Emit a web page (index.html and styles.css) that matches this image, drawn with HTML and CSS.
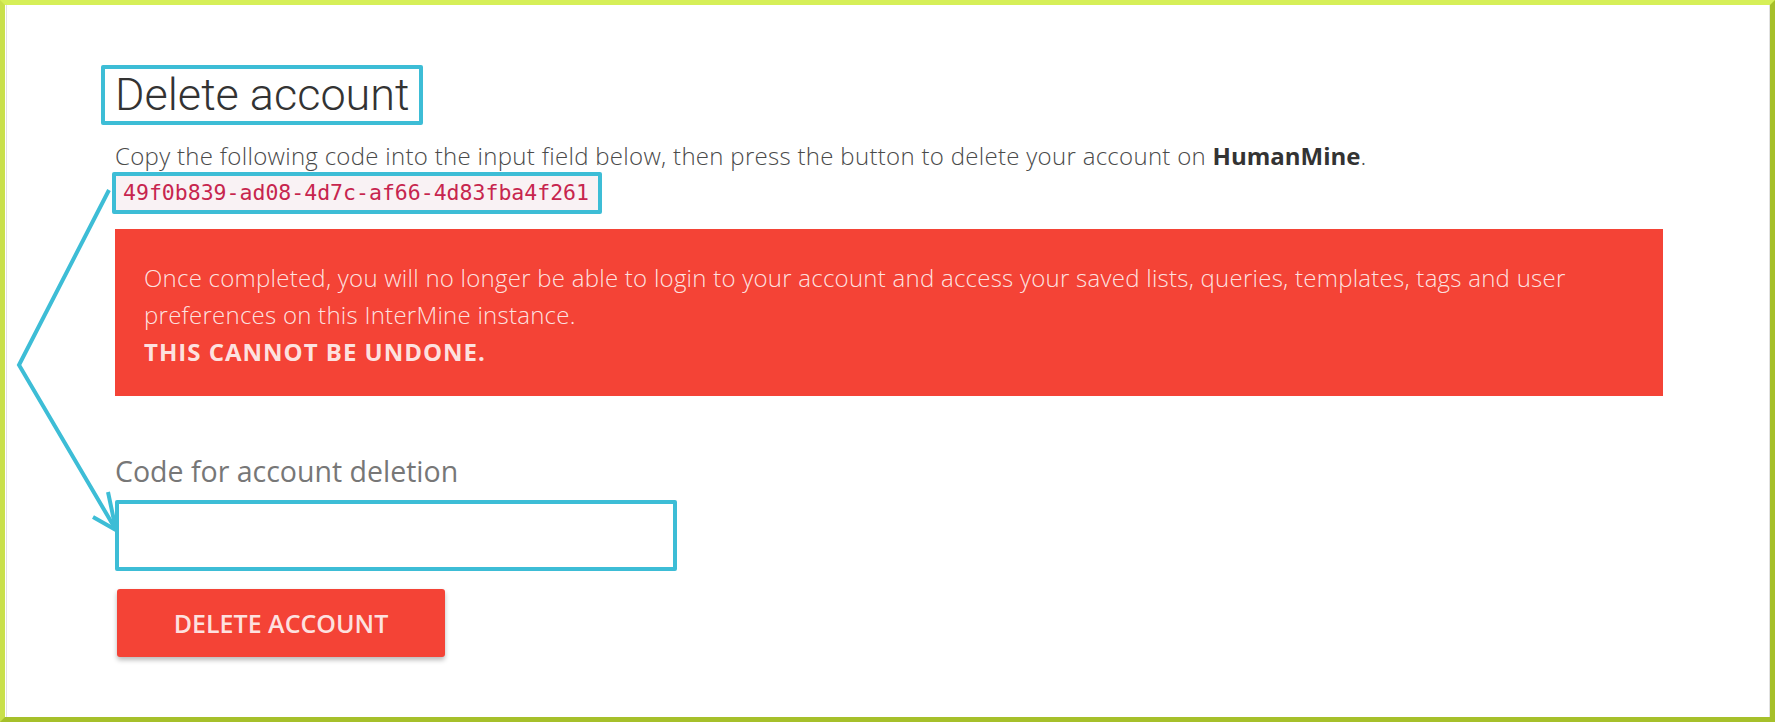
FILE: index.html
```html
<!DOCTYPE html>
<html lang="en">
<head>
<meta charset="utf-8">
<title>Delete account</title>
<link rel="stylesheet" href="styles.css">
</head>
<body>
<div class="frame">
  <div class="inner">
    <div class="content">
      <h1 class="title">Delete account</h1>
      <p class="lead">Copy the following code into the input field below, then press the button to delete your account on <strong>HumanMine</strong>.</p>
      <div class="code-row"><code class="code">49f0b839-ad08-4d7c-af66-4d83fba4f261</code></div>
      <div class="alert">
        <p class="alert-text">Once completed, you will no longer be able to login to your account and access your saved lists, queries, templates, tags and user preferences on this InterMine instance.</p>
        <p class="alert-strong">THIS CANNOT BE UNDONE.</p>
      </div>
      <label class="field-label" for="code-input">Code for account deletion</label>
      <input class="field-input" id="code-input" type="text">
      <button class="btn-delete" type="button">DELETE ACCOUNT</button>
    </div>
    <svg class="arrow" width="140" height="560" viewBox="0 0 140 560" aria-hidden="true">
      <polyline points="108,190 18,365 115,530" fill="none" stroke="#3dbdd6" stroke-width="4" stroke-linejoin="miter"/>
      <polyline points="107,492 115,530 92,517" fill="none" stroke="#3dbdd6" stroke-width="4" stroke-linejoin="miter"/>
    </svg>
  </div>
</div>
</body>
</html>
```

FILE: styles.css
```css
html, body {
  margin: 0;
  padding: 0;
  background: #ffffff;
}

.frame {
  box-sizing: border-box;
  width: 1775px;
  height: 722px;
  border-style: solid;
  border-width: 5px 5px 5px 5px;
  border-top-color: #d6ef58;
  border-left-color: #c9e04b;
  border-right-color: #a6c02a;
  border-bottom-color: #a6c02a;
  background: #ffffff;
}

.inner {
  position: relative;
  box-sizing: border-box;
  height: 100%;
  border-left: 1px solid #e2e2e2;
  border-right: 1px solid #e2e2e2;
  margin-left: 1px;
}

.content {
  padding: 60px 106px 0 108px;
  font-family: "Open Sans", "Liberation Sans", sans-serif;
  color: #444;
}

.title {
  display: inline-block;
  margin: 0 0 0 -14px;
  padding: 0 9px 0 10px;
  border: 4px solid #3dbdd6;
  border-radius: 2px;
  font-family: Roboto, "Open Sans", sans-serif;
  font-weight: 300;
  font-size: 45px;
  line-height: 52px;
  color: #333;
}

.lead {
  margin: 16px 0 0 0;
  font-weight: 300;
  font-size: 24px;
  letter-spacing: 0.3px;
  line-height: 30px;
  color: #4a4a4a;
}

.lead strong {
  font-weight: 700;
  letter-spacing: 0;
  color: #333;
}

.code-row {
  margin: 1px 0 0 -3px;
}

.code {
  display: inline-block;
  padding: 0 9px 0 7px;
  border: 4px solid #3dbdd6;
  border-radius: 2px;
  background: #f9f2f4;
  color: #c7254e;
  font-family: "DejaVu Sans Mono", "Liberation Mono", monospace;
  font-size: 21.5px;
  line-height: 34px;
}

.alert {
  margin-top: 15px;
  height: 167px;
  box-sizing: border-box;
  padding: 30px 29px 0 29px;
  background: #f44336;
  color: rgba(255, 255, 255, 0.86);
  font-size: 24px;
  line-height: 37px;
}

.alert-text {
  margin: 0;
  font-weight: 300;
  letter-spacing: 0.25px;
}

.alert-strong {
  margin: 0;
  font-weight: 700;
  letter-spacing: 1px;
}

.field-label {
  display: block;
  margin-top: 60px;
  font-size: 28.5px;
  line-height: 30px;
  color: #777;
}

.field-input {
  display: block;
  box-sizing: border-box;
  margin-top: 14px;
  width: 562px;
  height: 71px;
  border: 4px solid #3dbdd6;
  border-radius: 2px;
  background: #fff;
  outline: none;
  padding: 0 12px;
}

.btn-delete {
  display: block;
  margin: 18px 0 0 2px;
  width: 328px;
  height: 68px;
  border: none;
  border-radius: 3px;
  background: #f44336;
  color: rgba(255, 255, 255, 0.85);
  font-family: "Open Sans", "Liberation Sans", sans-serif;
  font-weight: 600;
  font-size: 25px;
  box-shadow: 0 3px 5px rgba(0, 0, 0, 0.28);
  padding: 0;
}

.arrow {
  position: absolute;
  left: -6px;
  top: -5px;
  pointer-events: none;
}
```
